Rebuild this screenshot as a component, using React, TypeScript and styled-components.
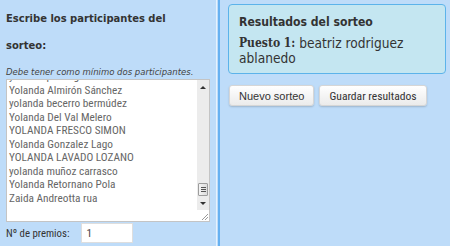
import React, { useLayoutEffect, useRef } from "react";
import styled, { createGlobalStyle } from "styled-components";

const participants = [
  "yolanda pérez gil",
  "Yolanda Almirón Sánchez",
  "yolanda becerro bermúdez",
  "Yolanda Del Val Melero",
  "YOLANDA FRESCO SIMON",
  "Yolanda Gonzalez Lago",
  "YOLANDA LAVADO LOZANO",
  "yolanda muñoz carrasco",
  "Yolanda Retornano Pola",
  "Zaida Andreotta rua",
  "",
  "",
];

const GlobalStyle = createGlobalStyle`
  html, body {
    margin: 0;
    height: 100%;
  }
  body {
    background-color: #bedcf9;
    font-family: "Roboto Condensed", "Liberation Sans", sans-serif;
    color: #333;
  }
`;

class App extends React.Component {
  render = () => {
    return (
      <>
        <GlobalStyle />
        <Page>
          <LeftPane>
            <Heading>Escribe los participantes del sorteo:</Heading>
            <Hint>Debe tener como mínimo dos participantes.</Hint>
            <NameBox />
            <PrizeRow>
              <PrizeLabel htmlFor="premios">Nº de premios:</PrizeLabel>
              <PrizeInput id="premios" defaultValue="1" />
            </PrizeRow>
          </LeftPane>
          <Divider />
          <RightPane>
            <ResultBox>
              <ResultTitle>Resultados del sorteo</ResultTitle>
              <ResultLine>
                <Place>Puesto 1:</Place> beatriz rodriguez ablanedo
              </ResultLine>
            </ResultBox>
            <ButtonRow>
              <ActionButton $wide>Nuevo sorteo</ActionButton>
              <ActionButton>Guardar resultados</ActionButton>
            </ButtonRow>
          </RightPane>
        </Page>
      </>
    );
  };
}

function NameBox() {
  const listRef = useRef<HTMLDivElement>(null);

  // the textarea is shown scrolled down a little
  useLayoutEffect(() => {
    if (listRef.current) listRef.current.scrollTop = 12;
  }, []);

  return (
    <FakeTextarea>
      <NameList ref={listRef}>
        {participants.map((name, i) => (
          <NameLine key={i}>{name || "\u00a0"}</NameLine>
        ))}
      </NameList>
      <Scrollbar>
        <ScrollButton $height={15}>
          <Arrow $up />
        </ScrollButton>
        <ScrollTrack>
          <ScrollThumb>
            <Grip />
            <Grip />
            <Grip />
          </ScrollThumb>
        </ScrollTrack>
        <ScrollButton $height={13}>
          <Arrow />
        </ScrollButton>
        <ResizeCorner>
          <svg width="8" height="8" viewBox="0 0 8 8">
            <path d="M1 7 L7 1 M4 7 L7 4" stroke="#9a9a9a" strokeWidth="1" />
          </svg>
        </ResizeCorner>
      </Scrollbar>
    </FakeTextarea>
  );
}

const Page = styled.div`
  display: flex;
  min-height: 100vh;
`;

const LeftPane = styled.div`
  width: 216px;
  box-sizing: border-box;
  padding: 5px 6px 0 6px;
  display: flex;
  flex-direction: column;
`;

const Divider = styled.div`
  width: 3px;
  border-left: 1px solid #e6f2fe;
  background: linear-gradient(to right, transparent 1px, #66b1f1 1px);
`;

const RightPane = styled.div`
  flex: 1;
  padding: 4px 4px 0 8px;
`;

const Heading = styled.h3`
  margin: 0;
  max-width: 185px;
  font-family: "DejaVu Sans Condensed", "DejaVu Sans", sans-serif;
  font-size: 11.1px;
  font-weight: bold;
  line-height: 27px;
  color: #333;
`;

const Hint = styled.p`
  margin: 7px 0 0 0;
  font-family: "DejaVu Sans", sans-serif;
  font-style: italic;
  font-size: 8.5px;
  line-height: 12px;
  color: #444;
  white-space: nowrap;
`;

const FakeTextarea = styled.div`
  margin-top: 1px;
  height: 143px;
  box-sizing: border-box;
  display: flex;
  background-color: #fff;
  border: 1px solid #c4c4c4;
`;

const NameList = styled.div`
  flex: 1;
  overflow: hidden;
  padding: 2px 2px;
`;

const NameLine = styled.div`
  font-family: "Roboto Condensed", "Liberation Sans", sans-serif;
  font-size: 11.3px;
  line-height: 13.5px;
  color: #666;
  white-space: nowrap;
`;

const Scrollbar = styled.div`
  width: 12px;
  display: flex;
  flex-direction: column;
  background-color: #ececec;
`;

const ScrollButton = styled.div<{ $height: number }>`
  height: ${(p) => p.$height}px;
  display: flex;
  align-items: center;
  justify-content: center;
`;

const Arrow = styled.span<{ $up?: boolean }>`
  width: 0;
  height: 0;
  border-left: 3px solid transparent;
  border-right: 3px solid transparent;
  ${(p) =>
    p.$up ? "border-bottom: 3px solid #333;" : "border-top: 3px solid #333;"}
`;

const ScrollTrack = styled.div`
  flex: 1;
  display: flex;
  flex-direction: column;
  justify-content: flex-end;
  align-items: center;
  padding-bottom: 1px;
`;

const ScrollThumb = styled.div`
  width: 10px;
  height: 13px;
  box-sizing: border-box;
  border: 1px solid #9d9d9d;
  border-radius: 1px;
  background: linear-gradient(to right, #f4f4f4, #dcdcdc);
  display: flex;
  flex-direction: column;
  align-items: center;
  justify-content: center;
  gap: 1px;
`;

const Grip = styled.span`
  width: 5px;
  height: 1px;
  background-color: #555;
`;

const ResizeCorner = styled.div`
  height: 11px;
  background-color: #fff;
  display: flex;
  align-items: flex-end;
  justify-content: flex-end;
`;

const PrizeRow = styled.div`
  margin-top: 1px;
  display: flex;
  align-items: center;
  gap: 12px;
`;

const PrizeLabel = styled.label`
  font-size: 10.8px;
  color: #333;
`;

const PrizeInput = styled.input`
  width: 52px;
  height: 20px;
  box-sizing: border-box;
  padding: 0 4px;
  border: 1px solid #dedede;
  background-color: #fff;
  font-family: "Roboto Condensed", "Liberation Sans", sans-serif;
  font-size: 11.3px;
  color: #444;
  outline: none;
`;

const ResultBox = styled.div`
  padding: 8px 10px 8px 10px;
  background-color: #c4e6f1;
  border: 1px solid #5cb3ea;
  border-radius: 4px;
`;

const ResultTitle = styled.h2`
  margin: 0;
  font-family: "DejaVu Sans Condensed", "DejaVu Sans", sans-serif;
  font-size: 12.1px;
  font-weight: bold;
  line-height: 19px;
  color: #333;
`;

const ResultLine = styled.p`
  margin: 4px 0 0 0;
  font-family: "DejaVu Sans Condensed", "DejaVu Sans", sans-serif;
  font-size: 13.6px;
  line-height: 14.5px;
  color: #333;
`;

const Place = styled.strong`
  font-family: "DejaVu Serif Condensed", "DejaVu Serif", serif;
  font-size: 12px;
  font-weight: bold;
  vertical-align: top;
`;

const ButtonRow = styled.div`
  margin: 11px 0 0 1px;
  display: flex;
  gap: 5px;
`;

const ActionButton = styled.button<{ $wide?: boolean }>`
  height: 21px;
  padding: 0 9px;
  border: 1px solid #d6d6d6;
  border-radius: 3px;
  background: linear-gradient(to bottom, #ffffff, #ebebeb);
  box-shadow: 0 1px 2px rgba(0, 0, 0, 0.18);
  font-family: ${(p) =>
    p.$wide
      ? `"Liberation Sans", Arial, sans-serif`
      : `"Roboto Condensed", "Liberation Sans", sans-serif`};
  font-size: ${(p) => (p.$wide ? "11px" : "11.6px")};
  color: #333;
  cursor: pointer;
`;

export default App;
